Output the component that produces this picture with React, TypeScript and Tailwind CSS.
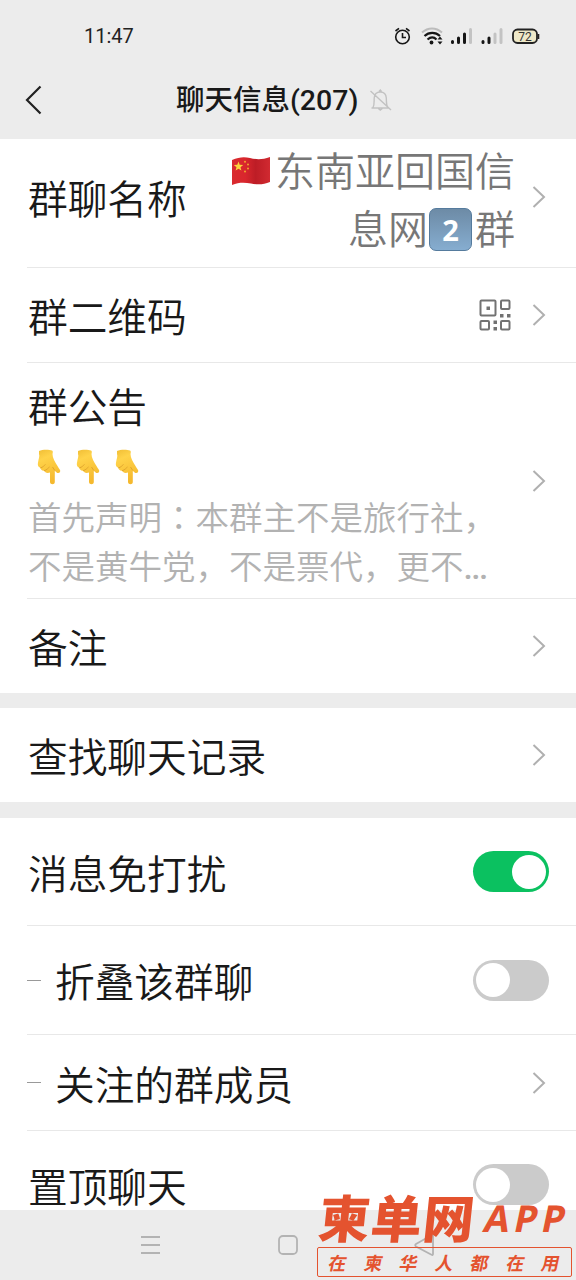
import type { ReactNode } from 'react';

const cjk = "font-['Roboto','Noto_Sans_CJK_SC',sans-serif]";

function Chevron() {
  return (
    <svg width="14" height="24" viewBox="0 0 14 24" fill="none" stroke="#b0b0b0" strokeWidth="2" className="shrink-0">
      <path d="M1.5 2 L12 12 L1.5 22" />
    </svg>
  );
}

function Toggle({ on = false }: { on?: boolean }) {
  return (
    <div className={`flex h-[41px] w-[76px] shrink-0 items-center rounded-full px-[3px] ${on ? 'justify-end bg-[#0bc160]' : 'justify-start bg-[#cbcbcb]'}`}>
      <div className="size-[34px] rounded-full bg-white" />
    </div>
  );
}

function Label({ children }: { children: ReactNode }) {
  return <span className="pt-2 pl-px text-[39.7px] leading-[48px] whitespace-nowrap text-[#191919]">{children}</span>;
}

function Row({ className, children }: { className: string; children: ReactNode }) {
  return <div className={`flex items-center justify-between ${className}`}>{children}</div>;
}

function Flag() {
  return (
    <svg width="40" height="32" viewBox="0 0 40 32" className="shrink-0">
      <defs>
        <linearGradient id="flag" x1="0" x2="1" y1="0" y2="0">
          <stop offset="0" stopColor="#d92b2f" />
          <stop offset="0.35" stopColor="#d9262d" />
          <stop offset="0.62" stopColor="#bd1d26" />
          <stop offset="1" stopColor="#d12a31" />
        </linearGradient>
      </defs>
      <path d="M0 5 C7 2 12 1.5 18 3 S30 5 38 2 V27 C31 30 25 29.5 19 28.5 S7 27 0 30 Z" fill="url(#flag)" />
      <path d="M6.5 6.5 L7.7 9.8 L11.2 10 L8.5 12.2 L9.4 15.6 L6.5 13.7 L3.6 15.6 L4.5 12.2 L1.8 10 L5.3 9.8 Z" fill="#fbd43c" />
      <g fill="#f2a52e">
        <circle cx="13" cy="6.8" r="1" />
        <circle cx="16" cy="9.6" r="1" />
        <circle cx="16" cy="13.6" r="1" />
        <circle cx="13" cy="16.6" r="1" />
      </g>
    </svg>
  );
}

function PointDown() {
  return (
    <svg width="24" height="36" viewBox="0 0 24 36">
      <defs>
        <linearGradient id="hand" x1="0" x2="0.3" y1="0" y2="1">
          <stop offset="0" stopColor="#f0bd35" />
          <stop offset="0.3" stopColor="#ffd34a" />
          <stop offset="1" stopColor="#f5b92e" />
        </linearGradient>
      </defs>
      <path
        d="M2 2 C5 .5 12 .5 15 1.5 C16 2 16 3 15.5 5 C15.5 9 18 13 20.5 17 C22 20 24 21 23 23 C22 25 19 24 17.8 21.5 V33 C17.8 36 13.2 36 13 33 V23.5 C10 24.5 8 23.5 7 21.8 C5 22 3.5 20.5 3.3 18.8 C1 18 .5 16 1 13.5 C1.5 10 3 7 2 5 Z"
        fill="url(#hand)"
      />
      <path d="M3.3 18.8 C6 18.5 7 16.5 8.5 15.5 M7 21.8 C10 21 11 19 12.5 18 M17.8 21.5 L15.5 18" fill="none" stroke="#dda22c" strokeWidth="0.9" />
    </svg>
  );
}

function StatusBar() {
  return (
    <div className="flex h-[72px] items-center justify-between pr-[36px] pl-[84px]">
      <span className="text-[20px] text-[#222]">11:47</span>
      <svg width="148" height="24" viewBox="392 24 148 24" fill="none">
        <g stroke="#161616" strokeWidth="1.6">
          <circle cx="402.5" cy="37" r="6.8" />
          <path d="M402.5 33 V37.5 H406 M395.5 31 L399 28.3 M409.5 31 L406 28.3" />
        </g>
        <path d="M422 32.5 C428 27 436 27 442 32.5" stroke="#bcbcbc" strokeWidth="2" />
        <path d="M424.5 36 C429 31.8 435.5 31.8 440 36 M427.5 39.5 C430.5 37 434 37 436.5 39.5" stroke="#161616" strokeWidth="2.2" />
        <circle cx="431.5" cy="42.5" r="1.9" fill="#161616" />
        <path d="M437.5 39.5 L440 36.5 L442.5 39.5 Z M437.5 41.5 L440 44.5 L442.5 41.5 Z" fill="#161616" />
        <g strokeWidth="3" strokeLinecap="round">
          <path d="M452.5 41.5 V42.5 M458.5 38 V42.5 M464.5 34 V42.5" stroke="#161616" />
          <path d="M470.5 29.5 V42.5" stroke="#c3c3c3" />
          <path d="M483 41.5 V42.5 M489 38 V42.5" stroke="#161616" />
          <path d="M495 34 V42.5 M501 29.5 V42.5" stroke="#c3c3c3" />
        </g>
        <rect x="513" y="29.5" width="24" height="13.5" rx="4.5" fill="#eee8c8" stroke="#222" strokeWidth="1.8" />
        <path d="M538.5 34 V39" stroke="#222" strokeWidth="1.6" />
        <text x="525" y="40.5" textAnchor="middle" fontSize="12" fill="#333" fontFamily="Roboto">72</text>
      </svg>
    </div>
  );
}

function TitleBar() {
  return (
    <div className="flex h-[67px] items-center pb-[12px]">
      <svg width="18" height="30" viewBox="0 0 18 30" fill="none" stroke="#222" strokeWidth="2.2" className="ml-[24px]">
        <path d="M16.5 1.5 L3 15 L16.5 28.5" />
      </svg>
      <h1 className="ml-[134px] pt-[3px] text-[28.5px] leading-[40px] font-medium whitespace-nowrap text-[#191919]">聊天信息(207)</h1>
      <svg width="22" height="24" viewBox="0 0 22 24" fill="none" stroke="#c2c2c2" strokeWidth="1.4" className="ml-[12px]">
        <path d="M1.5 20 H19 M3 19.5 C4.5 17 4 14 4.2 10 C4.5 6 7 4 10.3 4 C13.5 4 16 6 16.3 10 C16.5 14 16 17 18 19.5 M9 3.5 L10.3 2 L11.5 3.5 M8.3 20.5 L10.3 22 L12.3 20.5 M.5 3 L21 22" />
      </svg>
    </div>
  );
}

function QrIcon() {
  return (
    <svg width="32" height="32" viewBox="0 0 32 32" fill="none" stroke="#727272" strokeWidth="2">
      <rect x="1.5" y="1.5" width="15" height="15" rx="1" />
      <rect x="22" y="1.5" width="8.5" height="8.5" rx="1" />
      <rect x="1.5" y="22" width="8.5" height="8.5" rx="1" />
      <rect x="22" y="22" width="8.5" height="8.5" rx="1" />
      <g fill="#727272" stroke="none">
        <rect x="7.5" y="7.5" width="3.5" height="3.5" />
        <rect x="21" y="15" width="3.5" height="3.5" />
        <rect x="28" y="15" width="3.5" height="3.5" />
        <rect x="14.5" y="21.5" width="3.5" height="3.5" />
        <rect x="14.5" y="28" width="3.5" height="3.5" />
      </g>
    </svg>
  );
}

function NavBar() {
  return (
    <div className="flex h-[70px] bg-[#ececec]">
      <svg width="576" height="70" viewBox="0 0 576 70" fill="none" stroke="#b3b3b3" strokeWidth="1.8">
        <path d="M141 27 H160 M141 35 H160 M141 43 H160" />
        <rect x="279" y="26" width="18" height="18" rx="4" />
        <path d="M433 26 V44 Q433 45.5 431.5 44.8 L416 36.5 Q414.5 35 416 34 L431.5 25.3 Q433 24.5 433 26 Z" />
      </svg>
    </div>
  );
}

function Watermark() {
  return (
    <div className="absolute top-[1190px] left-[317px] w-[255px] font-['Noto_Sans_CJK_SC',sans-serif] text-[#e4532f]">
      <div className="flex h-[57px] -skew-x-6 items-center">
        <span className="-mt-[5px] ml-[2px] text-[51px] leading-[57px] font-black tracking-[1.2px] whitespace-nowrap">柬单网</span>
        <span className="-mt-[2px] ml-[9px] -skew-x-6 font-['Noto_Sans'] text-[37px] leading-[57px] font-bold tracking-[4.5px]">APP</span>
      </div>
      <div className="flex h-[30px] items-center justify-between rounded-[2px] border border-[#e4532f] px-[11px] text-[18px] leading-[28px] font-bold">
        {Array.from('在柬华人都在用').map((char, i) => (
          <span key={i} className="-skew-x-12">{char}</span>
        ))}
      </div>
    </div>
  );
}

export default function App() {
  return (
    <div className={`relative flex h-[1280px] w-[576px] flex-col overflow-hidden bg-white ${cjk}`}>
      <header className="bg-[#ececec]">
        <StatusBar />
        <TitleBar />
      </header>

      <main className="flex h-[1071px] flex-col overflow-hidden font-[350]">
        <section className="pl-[27px]">
          <Row className="h-[129px] border-b border-[#e8e8e8] pr-[30px] pb-[12px]">
            <Label>群聊名称</Label>
            <div className="flex items-center gap-[17px]">
              <div className="flex flex-col items-end pt-[6px] text-[40px] leading-[58px] text-[#777]">
                <div className="flex h-[58px] items-center gap-[3px]">
                  <Flag />
                  <span className="pt-[3px]">东南亚回国信</span>
                </div>
                <div className="flex h-[58px] items-center">
                  <span className="pt-[3px]">息网</span>
                  <span className="mr-[3px] ml-[1px] flex size-[43px] items-center justify-center rounded-[7px] border border-[#557b9d] bg-linear-to-b from-[#6d8ba6] to-[#86add0] font-['Open_Sans'] text-[29px] leading-none font-bold text-white">2</span>
                  <span className="pt-[3px]">群</span>
                </div>
              </div>
              <Chevron />
            </div>
          </Row>
          <Row className="h-[95px] border-b border-[#e8e8e8] pr-[30px]">
            <Label>群二维码</Label>
            <div className="flex items-center gap-[21px]">
              <QrIcon />
              <Chevron />
            </div>
          </Row>
          <Row className="h-[236px] border-b border-[#e8e8e8] pr-[30px]">
            <div className="flex flex-col pt-[7px]">
              <Label>群公告</Label>
              <div className="mt-[16px] mb-[6px] flex gap-[15px] pl-[10px]">
                <PointDown />
                <PointDown />
                <PointDown />
              </div>
              <p className="pl-px text-[33.5px] leading-[49px] whitespace-nowrap text-[#b2b2b2]">
                首先声明<span className="font-['Noto_Sans_CJK_TC']">：</span>本群主不是旅行社，
                <br />
                不是黄牛党，不是票代，更不<span className="font-medium tracking-[-1.6px]">...</span>
              </p>
            </div>
            <Chevron />
          </Row>
          <Row className="h-[94px] pr-[30px]">
            <Label>备注</Label>
            <Chevron />
          </Row>
        </section>

        <section className="border-t-[15px] border-b-[16px] border-[#ececec] pl-[27px]">
          <Row className="h-[94px] pr-[30px]">
            <Label>查找聊天记录</Label>
            <Chevron />
          </Row>
        </section>

        <section className="pl-[27px]">
          <Row className="h-[108px] border-b border-[#e8e8e8] pr-[27px]">
            <Label>消息免打扰</Label>
            <Toggle on />
          </Row>
          <Row className="h-[109px] border-b border-[#e8e8e8] pr-[27px]">
            <div className="flex items-center gap-[13px]">
              <div className="h-px w-[14px] bg-[#999]" />
              <Label>折叠该群聊</Label>
            </div>
            <Toggle />
          </Row>
          <Row className="h-[96px] border-b border-[#e8e8e8] pr-[30px]">
            <div className="flex items-center gap-[13px]">
              <div className="h-px w-[14px] bg-[#999]" />
              <Label>关注的群成员</Label>
            </div>
            <Chevron />
          </Row>
          <Row className="h-[107px] pr-[27px]">
            <Label>置顶聊天</Label>
            <Toggle />
          </Row>
        </section>
      </main>

      <NavBar />
      <Watermark />
    </div>
  );
}
